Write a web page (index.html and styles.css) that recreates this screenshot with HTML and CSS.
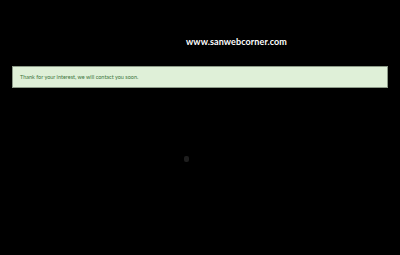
FILE: index.html
```html
<!DOCTYPE html>
<html lang="en">
<head>
    <meta charset="UTF-8">
    <meta name="viewport" content="width=device-width, initial-scale=1.0">
    <title>Thank you</title>
    <link rel="stylesheet" href="styles.css">
</head>
<body>

    <header class="site-header">
        <a class="site-link" href="#">www.sanwebcorner.com</a>
    </header>

    <!-- Повідомлення після відправки форми -->
    <div class="alert-success">
        Thank for your interest, we will contact you soon.
    </div>

    <div class="loader-wrap">
        <span class="loader"></span>
    </div>

</body>
</html>
```

FILE: styles.css
```css
body {
    font-family: Lato, 'Noto Sans', sans-serif;
    background-color: #000;
    margin: 0;
    height: 255px;
    overflow: hidden;
}

.site-header {
    padding: 33px 0 0 186px;
    margin-bottom: 18px;
    line-height: 12px;
}

.site-link {
    color: #fff;
    font-size: 9px;
    font-weight: 700;
    text-decoration: none;
    letter-spacing: 0.1px;
}

.alert-success {
    margin: 0 12px;
    height: 22px;
    box-sizing: border-box;
    padding: 0 7px;
    display: flex;
    align-items: center;
    background-color: #dff0d8;
    border: 1px solid #8c9a88;
    color: #3c763d;
    font-size: 5.5px;
}

.loader-wrap {
    display: flex;
    padding: 68px 0 0 184px;
}

.loader {
    width: 5px;
    height: 6px;
    border-radius: 2px;
    background-color: #1e1e1e;
}
```
